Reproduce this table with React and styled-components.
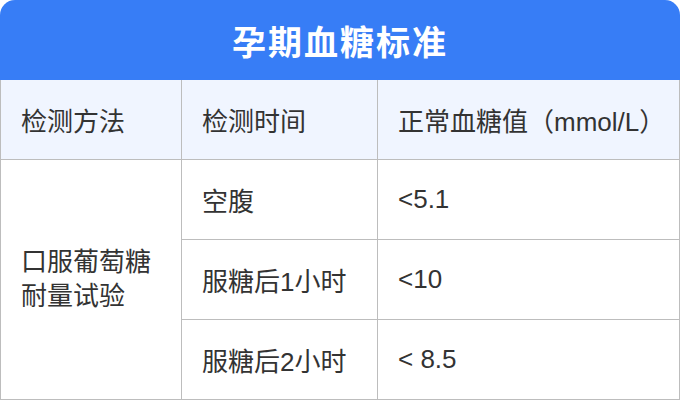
import React from "react";
import styled, { createGlobalStyle } from "styled-components";

const GlobalStyle = createGlobalStyle`
  body {
    margin: 0;
    background: #ffffff;
    font-family: "Liberation Sans", "Noto Sans CJK SC", sans-serif;
  }
`;

const rows = [
  { time: "空腹", value: "<5.1" },
  { time: "服糖后1小时", value: "<10" },
  { time: "服糖后2小时", value: "< 8.5" }
];

const App = () => (
  <>
    <GlobalStyle />
    <Card>
      <Title>孕期血糖标准</Title>
      <Table>
        <thead>
          <tr>
            <HeadCell $w={181}>检测方法</HeadCell>
            <HeadCell $w={196}>检测时间</HeadCell>
            <HeadCell>正常血糖值（mmol/L）</HeadCell>
          </tr>
        </thead>
        <tbody>
          {rows.map((r, i) => (
            <tr key={r.time}>
              {i === 0 && (
                <Cell rowSpan={3}>
                  <MethodText>口服葡萄糖耐量试验</MethodText>
                </Cell>
              )}
              <Cell>{r.time}</Cell>
              <Cell>{r.value}</Cell>
            </tr>
          ))}
        </tbody>
      </Table>
    </Card>
  </>
);

const Card = styled.div`
  width: 680px;
  height: 400px;
  overflow: hidden;
  background: #ffffff;
`;

const Title = styled.div`
  height: 80px;
  display: flex;
  align-items: center;
  justify-content: center;
  background: #377df6;
  border-radius: 15px 15px 0 0;
  color: #ffffff;
  font-family: "Noto Sans CJK SC", sans-serif;
  font-size: 34px;
  font-weight: 700;
  letter-spacing: 2px;
`;

const Table = styled.table`
  width: 680px;
  border-collapse: collapse;
  table-layout: fixed;
  color: #333333;
  font-size: 26px;
`;

const HeadCell = styled.th`
  width: ${p => (p.$w ? `${p.$w}px` : "auto")};
  height: 79px;
  padding: 0 0 0 20px;
  box-sizing: border-box;
  text-align: left;
  font-weight: 400;
  background: #f0f5ff;
  border: 1px solid #bdbdbd;
  border-top: none;
  white-space: nowrap;
`;

const Cell = styled.td`
  height: 80px;
  padding: 0 0 0 20px;
  box-sizing: border-box;
  border: 1px solid #bdbdbd;
  vertical-align: middle;
`;

const MethodText = styled.div`
  width: 136px;
  line-height: 34px;
`;

export default App;
